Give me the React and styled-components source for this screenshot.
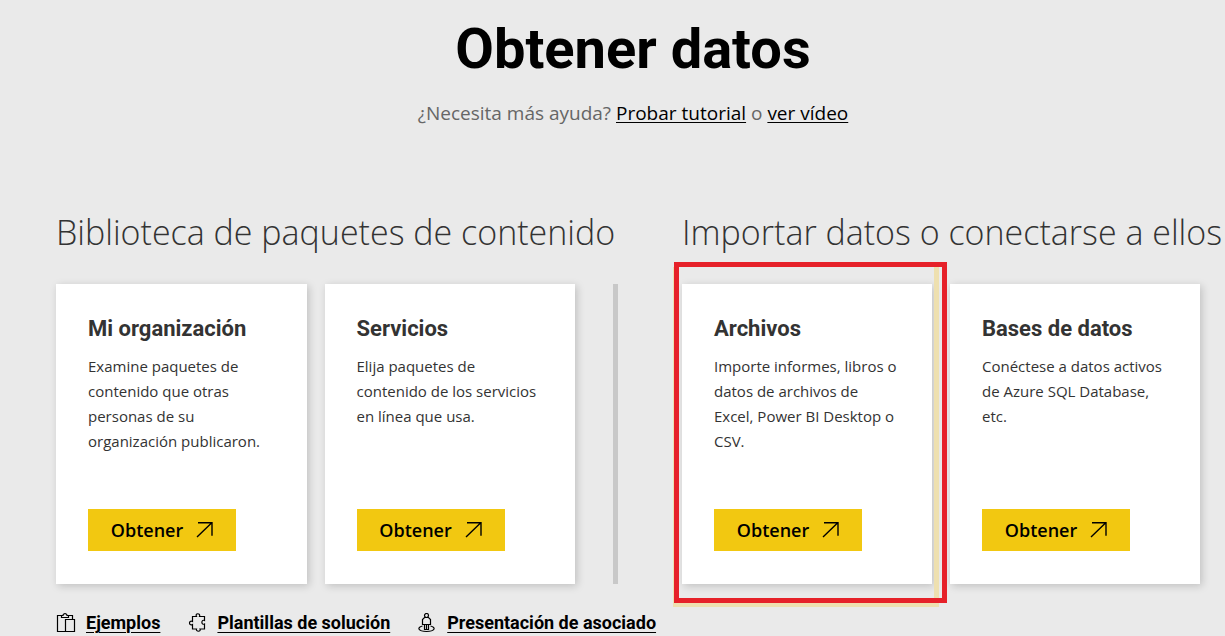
import styled, { createGlobalStyle } from "styled-components";

const packs = [
  {
    title: "Mi organización",
    text: "Examine paquetes de contenido que otras personas de su organización publicaron.",
  },
  {
    title: "Servicios",
    text: "Elija paquetes de contenido de los servicios en línea que usa.",
  },
];

const sources = [
  {
    title: "Archivos",
    text: "Importe informes, libros o datos de archivos de Excel, Power BI Desktop o CSV.",
    highlighted: true,
  },
  {
    title: "Bases de datos",
    text: "Conéctese a datos activos de Azure SQL Database, etc.",
  },
];

function ArrowIcon() {
  return (
    <svg width="17" height="16" viewBox="0 0 17 16" aria-hidden="true">
      <path
        d="M1 15L15.5 1M2 .75h14v13"
        fill="none"
        stroke="currentColor"
        strokeWidth="1.4"
      />
    </svg>
  );
}

function ClipboardIcon() {
  return (
    <LinkIcon viewBox="0 0 20 20" aria-hidden="true">
      <path d="M9.500 18.500H1.500V2.500H5.500M12.500 2.500H16.500V6.500M5.500 2.500V4.500H12.500V2.500H11C11 0 7 0 7 2.500ZM9.500 6.500H18.500V18.500H9.500Z" />
    </LinkIcon>
  );
}

function PuzzleIcon() {
  return (
    <LinkIcon viewBox="-1 1 20 20" aria-hidden="true">
      <path d="M4.500 4.500H8.500C6.500 .8 13 .8 11.500 4.500H16.500V8.500C13 7 13 13.500 16.500 12V17H12C13.500 20 7.500 20 8.500 17H4.500V12.500C.5 14.500 .5 7.500 4.500 9.500Z" />
    </LinkIcon>
  );
}

function PersonIcon() {
  return (
    <LinkIcon viewBox="0 0 20 20" aria-hidden="true">
      <circle cx="9.500" cy="2.500" r="2" />
      <path d="M7.500 4.500H11.500L13.500 6.500V11.500H5.500V6.500ZM7.500 11.500V16.500H11.500V11.500M9.500 12V16M5.500 13C-.5 14.500 1 18.500 9.500 18.500S19.500 14.500 13.500 13" />
    </LinkIcon>
  );
}

function CardList({ items, divided }) {
  return (
    <Cards $divided={divided}>
      {items.map((item) => (
        <Card key={item.title}>
          <CardTitle>{item.title}</CardTitle>
          <CardText>{item.text}</CardText>
          <GetButton type="button">
            Obtener
            <ArrowIcon />
          </GetButton>
          {item.highlighted && <Highlight />}
        </Card>
      ))}
    </Cards>
  );
}

function App() {
  return (
    <>
      <GlobalStyle />
      <Page>
        <Header>
          <Title>Obtener datos</Title>
          <Help>
            ¿Necesita más ayuda? <a href="#tutorial">Probar tutorial</a> o{" "}
            <a href="#video">ver vídeo</a>
          </Help>
        </Header>
        <Columns>
          <section>
            <SectionTitle>Biblioteca de paquetes de contenido</SectionTitle>
            <CardList items={packs} divided />
          </section>
          <section>
            <SectionTitle>Importar datos o conectarse a ellos</SectionTitle>
            <CardList items={sources} />
          </section>
        </Columns>
        <Links>
          <LinkItem href="#ejemplos">
            <ClipboardIcon />
            <span>Ejemplos</span>
          </LinkItem>
          <LinkItem href="#plantillas">
            <PuzzleIcon />
            <span>Plantillas de solución</span>
          </LinkItem>
          <LinkItem href="#asociado">
            <PersonIcon />
            <span>Presentación de asociado</span>
          </LinkItem>
        </Links>
      </Page>
    </>
  );
}

const GlobalStyle = createGlobalStyle`
  * {
    box-sizing: border-box;
  }
  body {
    margin: 0;
    background: #eaeaea;
    color: #333;
    font-family: "Segoe UI", "Open Sans", "Noto Sans", sans-serif;
  }
  h1, h2, h3, p {
    margin: 0;
  }
`;

const Page = styled.main`
  padding: 16px 25px 0 56px;
`;

const Header = styled.header`
  padding-left: 10px;
  text-align: center;
`;

const Title = styled.h1`
  color: #000;
  font-family: Roboto, sans-serif;
  font-size: 56px;
  font-weight: 700;
  line-height: 66px;
`;

const Help = styled.p`
  margin-top: 16px;
  color: #666;
  font-size: 19px;
  line-height: 30px;
  a {
    color: #000;
    text-underline-offset: 2px;
    text-decoration-thickness: 1px;
  }
`;

const Columns = styled.div`
  display: grid;
  grid-template-columns: minmax(0, 562fr) minmax(0, 518fr);
  gap: 64px;
  margin-top: 80px;
`;

const SectionTitle = styled.h2`
  font-size: 34px;
  font-weight: 300;
  line-height: 48px;
  white-space: nowrap;
`;

const Cards = styled.div`
  display: grid;
  grid-template-columns: 1fr 1fr;
  gap: 18px;
  margin-top: 28px;
  padding-right: ${(props) => (props.$divided ? "38px" : "0")};
  border-right: ${(props) => (props.$divided ? "5px solid #c8c8c8" : "0")};
`;

const Card = styled.article`
  position: relative;
  display: flex;
  flex-direction: column;
  align-items: flex-start;
  min-height: 300px;
  padding: 32px 32px 33px;
  background: #fff;
  box-shadow: 2px 2px 8px rgba(0, 0, 0, 0.18);
`;

const CardTitle = styled.h3`
  font-family: Roboto, sans-serif;
  font-size: 22px;
  font-weight: 700;
  line-height: 26px;
`;

const CardText = styled.p`
  margin-top: 12px;
  font-size: 15px;
  line-height: 25px;
`;

const GetButton = styled.button`
  display: flex;
  align-items: center;
  justify-content: center;
  gap: 13px;
  width: 148px;
  height: 42px;
  margin-top: auto;
  padding: 0;
  border: 0;
  background: #f2c811;
  color: #000;
  font-family: inherit;
  font-size: 18px;
  font-weight: 600;
  cursor: pointer;
`;

const Highlight = styled.div`
  position: absolute;
  z-index: 1;
  inset: -22px -15px -19px -8px;
  pointer-events: none;
  &::before {
    content: "";
    position: absolute;
    inset: 5px 8px -4px -1px;
    border: solid #eee0b0;
    border-width: 0 5px 4px 1px;
  }
  &::after {
    content: "";
    position: absolute;
    inset: 0;
    border: 5px solid #e62129;
  }
`;

const Links = styled.nav`
  display: flex;
  gap: 27px;
  margin-top: 27px;
`;

const LinkItem = styled.a`
  display: flex;
  align-items: center;
  gap: 10px;
  color: #000;
  font-family: Roboto, sans-serif;
  font-size: 18px;
  font-weight: 700;
  line-height: 24px;
  text-decoration: none;
  span {
    text-decoration: underline;
    text-decoration-thickness: 1px;
    text-underline-offset: 3px;
  }
`;

const LinkIcon = styled.svg`
  width: 20px;
  height: 20px;
  fill: none;
  stroke: currentColor;
  stroke-width: 1.2;
`;

export default App;
